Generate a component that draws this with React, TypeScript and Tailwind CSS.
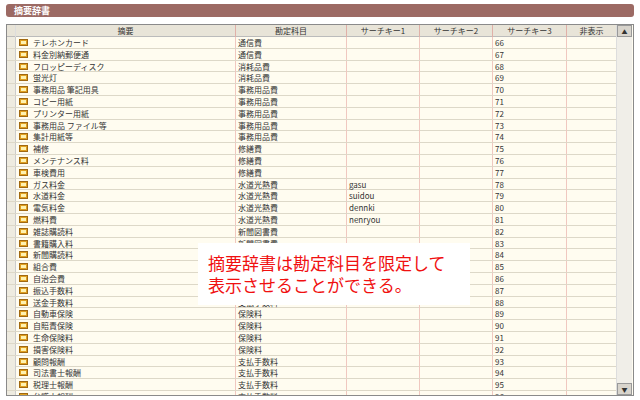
const rows: [string, string, string][] = [
  ["テレホンカード", "通信費", ""],
  ["料金別納郵便通", "通信費", ""],
  ["フロッピーディスク", "消耗品費", ""],
  ["蛍光灯", "消耗品費", ""],
  ["事務用品 筆記用具", "事務用品費", ""],
  ["コピー用紙", "事務用品費", ""],
  ["プリンター用紙", "事務用品費", ""],
  ["事務用品 ファイル等", "事務用品費", ""],
  ["集計用紙等", "事務用品費", ""],
  ["補修", "修繕費", ""],
  ["メンテナンス料", "修繕費", ""],
  ["車検費用", "修繕費", ""],
  ["ガス料金", "水道光熱費", "gasu"],
  ["水道料金", "水道光熱費", "suidou"],
  ["電気料金", "水道光熱費", "dennki"],
  ["燃料費", "水道光熱費", "nenryou"],
  ["雑誌購読料", "新聞図書費", ""],
  ["書籍購入料", "新聞図書費", ""],
  ["新聞購読料", "新聞図書費", ""],
  ["組合費", "諸会費", ""],
  ["自治会費", "諸会費", ""],
  ["振込手数料", "支払手数料", ""],
  ["送金手数料", "支払手数料", ""],
  ["自動車保険", "保険料", ""],
  ["自賠責保険", "保険料", ""],
  ["生命保険料", "保険料", ""],
  ["損害保険料", "保険料", ""],
  ["顧問報酬", "支払手数料", ""],
  ["司法書士報酬", "支払手数料", ""],
  ["税理士報酬", "支払手数料", ""],
  ["弁護士報酬", "支払手数料", ""],
];

const cols = "grid grid-cols-[9px_220px_111px_73px_73px_74px_49px]";

function Icon() {
  return (
    <span className="inline-block w-[9px] h-[7px] bg-[#e0a020] border border-[#a06810] mr-[5px] relative">
      <span className="absolute left-[1px] top-[1px] w-[5px] h-[3px] bg-[#fff2b0]" />
    </span>
  );
}

export default function App() {
  return (
    <div className="w-[640px] h-[400px] bg-white relative overflow-hidden" style={{ fontFamily: '"Noto Sans CJK JP", "Liberation Sans", sans-serif' }}>
      <div className="pt-[4px] px-[6px]">
        <div className="h-[13px] bg-[#9c6a64] rounded-[3px] text-white text-[9px] leading-[13px] pl-[8px] font-bold">摘要辞書</div>
      </div>
      <div className="mx-[6px] mt-[7px] h-[372px] border border-[#8a8a8a] bg-[#fffcf0] flex overflow-hidden text-[8px] text-[#333]">
        <div className="w-[609px]">
          <div className={`${cols} h-[12px] bg-[#e8e4d8] border-b border-[#bbb] leading-[12px] text-center`}>
            <div className="border-r border-[#ddd]" />
            <div className="border-r border-[#e0b0a8]">摘要</div>
            <div className="border-r border-[#e0b0a8]">勘定科目</div>
            <div className="border-r border-[#e0b0a8]">サーチキー1</div>
            <div className="border-r border-[#e0b0a8]">サーチキー2</div>
            <div className="border-r border-[#e0b0a8]">サーチキー3</div>
            <div>非表示</div>
          </div>
          {rows.map((r, i) => (
            <div key={i} className={`${cols} h-[11.8px] border-b border-[#ddd8c8] leading-[11px]`}>
              <div className="bg-[#eeebe0] border-r border-[#ccc]" />
              <div className="border-r border-[#f0c8c0] pl-[3px] flex items-center whitespace-nowrap"><Icon />{r[0]}</div>
              <div className="border-r border-[#f0c8c0] pl-[2px]">{r[1]}</div>
              <div className="border-r border-[#f0c8c0] pl-[2px]">{r[2]}</div>
              <div className="border-r border-[#f0c8c0]" />
              <div className="border-r border-[#f0c8c0] pl-[2px]">{66 + i}</div>
              <div />
            </div>
          ))}
        </div>
        <div className="w-[16px] bg-[#f0eee8] flex flex-col justify-between border-l border-[#ddd]">
          <div className="h-[12px] bg-[#d8d4cc] flex items-center justify-center text-[6px] border border-[#999]">▲</div>
          <div className="h-[12px] bg-[#d8d4cc] flex items-center justify-center text-[6px] border border-[#999]">▼</div>
        </div>
      </div>
      <div className="absolute left-[198px] top-[243px] w-[272px] h-[62px] bg-white text-[#f01010] text-[17px] leading-[22px] pl-[10px] pt-[9px]">
        摘要辞書は勘定科目を限定して<br />表示させることができる。
      </div>
    </div>
  );
}
